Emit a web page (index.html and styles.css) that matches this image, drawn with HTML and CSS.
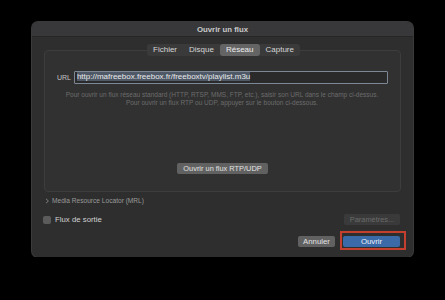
FILE: index.html
```html
<!DOCTYPE html>
<html lang="fr">

<head>
    <meta charset="UTF-8">
    <meta name="viewport" content="width=device-width, initial-scale=1.0">
    <title>Ouvrir un flux</title>

    <!-- STYLING -->

    <link rel="stylesheet" href="styles.css">

</head>

<body>

    <div class="window">
        <div class="titlebar">Ouvrir un flux</div>

        <div class="content">
            <!-- Source tabs -->
            <div class="tabs">
                <span class="tab">Fichier</span>
                <span class="tab">Disque</span>
                <span class="tab active">Réseau</span>
                <span class="tab">Capture</span>
            </div>

            <!-- Network panel -->
            <div class="panel">
                <div class="url-row">
                    <label for="url">URL</label>
                    <div class="field">
                        <span class="selected">http://mafreebox.freebox.fr/freeboxtv/playlist.m3u</span>
                    </div>
                </div>
                <p class="hint">
                    Pour ouvrir un flux réseau standard (HTTP, RTSP, MMS, FTP, etc.), saisir son URL dans le champ ci-dessus.<br>
                    Pour ouvrir un flux RTP ou UDP, appuyer sur le bouton ci-dessous.
                </p>
                <div class="center-btn">
                    <button class="btn btn-rtp">Ouvrir un flux RTP/UDP</button>
                </div>
            </div>

            <div class="mrl">
                <svg width="5" height="6" viewBox="0 0 5 6"><path d="M1 0.8 L3.4 3 L1 5.2" fill="none" stroke="#8a8a8a" stroke-width="0.9"/></svg>
                Media Resource Locator (MRL)
            </div>

            <div class="output-row">
                <div class="check">
                    <span class="box"></span>
                    <span>Flux de sortie</span>
                </div>
                <button class="btn btn-disabled">Paramètres...</button>
            </div>

            <div class="actions">
                <button class="btn">Annuler</button>
                <div class="highlight">
                    <button class="btn btn-primary">Ouvrir</button>
                    <span class="mark"></span>
                </div>
            </div>
        </div>
    </div>

</body>

</html>
```

FILE: styles.css
```css
body {
    font-family: "Liberation Sans", Arial, sans-serif;
    background-color: #000;
    margin: 0;
    padding: 22px 0 0 32px;
}

.window {
    width: 381px;
    height: 235px;
    background-color: #2e2e2e;
    border-radius: 6px;
    display: flex;
    flex-direction: column;
    overflow: hidden;
    box-shadow: 0 0 0 1px #3a3a3a;
}

.titlebar {
    height: 15px;
    line-height: 15px;
    background-color: #38383b;
    color: #c9c9c9;
    font-size: 7.8px;
    font-weight: bold;
    text-align: center;
    border-bottom: 1px solid #262626;
    box-sizing: border-box;
}

.content {
    padding: 7px 12px 0 12px;
    display: flex;
    flex-direction: column;
}

/* Segmented control sitting on the panel border */
.tabs {
    align-self: center;
    display: flex;
    height: 12px;
    background-color: #3a3a3a;
    border-radius: 3px;
    margin-bottom: -6px;
    position: relative;
    z-index: 1;
    margin-left: 2px;
}

.tab {
    padding: 0 6px;
    font-size: 8px;
    line-height: 12px;
    color: #d6d6d6;
    border-radius: 3px;
}

.tab.active {
    background-color: #646464;
    color: #eee;
}

.panel {
    height: 142px;
    box-sizing: border-box;
    background-color: #313131;
    border: 1px solid #3d3d3d;
    border-radius: 4px;
    padding: 20px 12px 0 11px;
}

.url-row {
    display: flex;
    align-items: center;
    height: 13px;
}

label {
    font-size: 7px;
    color: #c4c4c4;
    width: 17px;
    margin-left: 1px;
}

.field {
    width: 316px;
    height: 13px;
    box-sizing: border-box;
    border: 1.5px solid #7d8896;
    background-color: #2a2a2a;
    border-radius: 1px;
    font-size: 8px;
    line-height: 10px;
    padding-left: 2px;
    white-space: nowrap;
    overflow: hidden;
}

.selected {
    background-color: #4e5866;
    color: #e8e8e8;
}

.hint {
    margin: 7px 0 0;
    font-size: 6.5px;
    line-height: 8px;
    color: #6c6c6c;
    text-align: center;
}

.center-btn {
    text-align: center;
    margin-top: 50px;
}

.btn {
    font-family: "Liberation Sans", Arial, sans-serif;
    background-color: #616161;
    color: #e2e2e2;
    border: none;
    border-radius: 2px;
    height: 11px;
    padding: 0;
    font-size: 7.8px;
    line-height: 11px;
    cursor: pointer;
}

.btn-rtp {
    width: 91px;
    font-size: 7.4px;
    margin-left: 1px;
}

.mrl {
    margin-top: 5px;
    height: 8px;
    font-size: 6.6px;
    line-height: 8px;
    color: #9a9a9a;
    display: flex;
    align-items: center;
    gap: 2px;
    padding-left: 1px;
}

.output-row {
    margin-top: 9px;
    display: flex;
    justify-content: space-between;
    align-items: center;
    height: 11px;
    padding-right: 1px;
}

.check {
    display: flex;
    align-items: center;
    gap: 4px;
    font-size: 7.8px;
    color: #d2d2d2;
    margin-left: -1px;
}

.box {
    width: 8px;
    height: 8px;
    border-radius: 2px;
    background-color: #5b5b5b;
}

.btn-disabled {
    width: 56px;
    background-color: #3a3a3a;
    color: #6b6b6b;
    font-size: 7.4px;
}

.actions {
    margin-top: 11px;
    display: flex;
    justify-content: flex-end;
    gap: 8px;
    padding-right: 1px;
}

.actions .btn {
    width: 37px;
}

.actions .btn-primary {
    width: 57px;
    background-color: #3a6aa8;
    color: #eef2f8;
}

.highlight {
    position: relative;
    display: flex;
}

/* red annotation frame around the Ouvrir button */
.mark {
    position: absolute;
    left: -3px;
    top: -5px;
    right: -6px;
    bottom: -3px;
    border: 2px solid #c53f2f;
    box-sizing: border-box;
}
```
